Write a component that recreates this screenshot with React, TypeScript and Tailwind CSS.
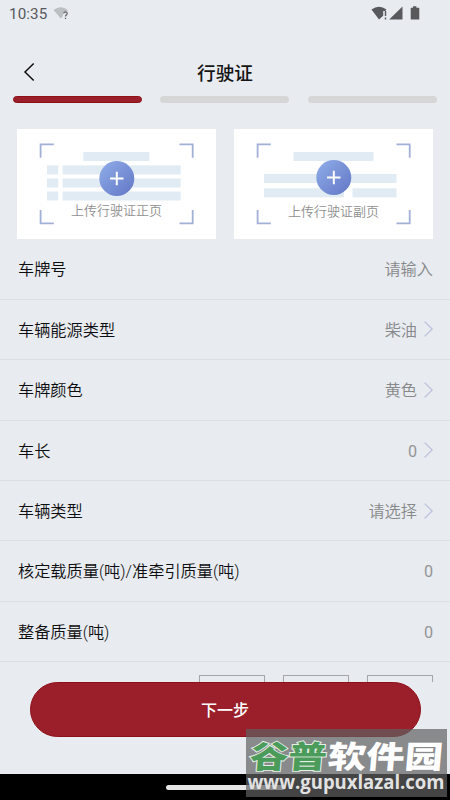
import React from "react";

type Row = { label: string; value: string; arrow?: boolean };

const rows: Row[] = [
  { label: "车牌号", value: "请输入" },
  { label: "车辆能源类型", value: "柴油", arrow: true },
  { label: "车牌颜色", value: "黄色", arrow: true },
  { label: "车长", value: "0", arrow: true },
  { label: "车辆类型", value: "请选择", arrow: true },
  { label: "核定载质量(吨)/准牵引质量(吨)", value: "0" },
  { label: "整备质量(吨)", value: "0" },
];

function StatusBar() {
  return (
    <div className="flex h-7 shrink-0 items-center justify-between pr-[29px] pl-[9px] text-[#57595c]">
      <div className="flex items-center gap-[6px]">
        <span className="text-[15.2px] leading-7 tracking-[0.1px]">10:35</span>
        <svg width="18" height="16" viewBox="0 0 18 16">
          <path d="M0.5 4Q7.5-1.5 15 4L13.5 6Q9.5 5.5 10 10L7.8 12.5Z" fill="#bcbfc1" />
          <path d="M10.7 7.5Q10.8 5.8 12.6 5.8Q14.3 5.9 14.3 7.5Q14.2 8.4 13.2 9.1Q12.5 9.6 12.5 10.5M12.5 11.8v1.3" fill="none" stroke="#66686a" strokeWidth="1.3" />
        </svg>
      </div>
      <svg width="50" height="16" viewBox="0 0 50 16">
        <path d="M0.5 3.5Q8-1.8 15.5 3.5L14 5H12.2V9.8L8 13.4Z" fill="#57595c" />
        <path d="M14.5 4.8v5.2M14.5 11.4v2" stroke="#57595c" strokeWidth="1.4" />
        <path d="M18.2 13.4L31.5 0.5V13.4Z" fill="#57595c" />
        <path d="M42 0.3h3.4v1.5h2.2q.7 0 .7.7v10.4q0 .7-.7.7h-7.2q-.7 0-.7-.7V2.5q0-.7.7-.7h1.6Z" fill="#57595c" />
      </svg>
    </div>
  );
}

function UploadCard({ back = false }: { back?: boolean }) {
  const cy = back ? 48.1 : 49.1;
  const cx = 99.8;
  return (
    <div className="relative h-[110px] w-[199px] bg-white">
      <svg width="199" height="110" viewBox="0 0 199 110" className="block">
        <defs>
          <linearGradient id={back ? "blueBack" : "blueFront"} x1="0" y1="0" x2="1" y2="1">
            <stop offset="0" stopColor="#90aee8" />
            <stop offset="1" stopColor="#6276c6" />
          </linearGradient>
        </defs>
        <g fill="#e0ebf4">
          {back ? (
            <>
              <rect x="59.5" y="23" width="80" height="9" />
              <rect x="30" y="45" width="132.5" height="9" />
              <rect x="30" y="59.3" width="80" height="9" />
              <rect x="118.5" y="59.3" width="44" height="9" />
            </>
          ) : (
            <>
              <rect x="66.4" y="23" width="66" height="9" />
              {[36.4, 49.5, 62.5].map((y) => (
                <g key={y}>
                  <rect x="30" y={y} width="11.2" height="9" />
                  <rect x="45.6" y={y} width="118" height="9" />
                </g>
              ))}
            </>
          )}
        </g>
        <path
          d="M23.6 28.8V15.4H36.8M162.5 15.4H175.7V28.8M23.6 81V94.4H36.8M162.5 94.4H175.7V81"
          fill="none"
          stroke="#a2b0d7"
          strokeWidth="1.8"
        />
        <circle cx={cx} cy={cy + 0.4} r="17.5" fill={back ? "url(#blueBack)" : "url(#blueFront)"} />
        <path d={`M${cx - 6.7} ${cy + 0.4}h13.4M${cx} ${cy - 6.3}v13.4`} stroke="#fff" strokeWidth="2" />
      </svg>
      <span className={`absolute inset-x-0 text-center text-[13px] leading-[20px] font-[350] text-[#909090] ${back ? "top-[73px]" : "top-[72px]"}`}>
        {back ? "上传行驶证副页" : "上传行驶证正页"}
      </span>
    </div>
  );
}

function FormRow({ label, value, arrow }: Row) {
  return (
    <div className="flex h-[60.4px] shrink-0 items-center justify-between border-b border-[#dcdfe2] pt-[3px] pr-[17px] pl-[18px] text-[16.2px] font-[350]">
      <span className="text-[#0c0d0e]">{label}</span>
      <span className={`flex items-center gap-[7px] ${value === "0" ? "font-normal text-[#949697]" : "text-[#868889]"}`}>
        {value}
        {arrow && (
          <svg width="9" height="16" viewBox="0 0 9 16" className="-mt-[3px]" fill="none" stroke="#bac0dc" strokeWidth="1.2">
            <path d="M0.6 0.6L8.2 8L0.6 15.4" />
          </svg>
        )}
      </span>
    </div>
  );
}

function Watermark() {
  return (
    <div className="absolute top-[729px] left-[246px] h-[68px] w-[201px] bg-[#616161]/70">
      <svg width="201" height="68" viewBox="0 0 201 68" className="block">
        <g transform="translate(5 39) skewX(-5)" fontFamily="'Noto Sans CJK SC', sans-serif" fontWeight="900" fontSize="31">
          <text x="-2" y="0" textLength="77" lengthAdjust="spacingAndGlyphs" fill="#4b9b5b" stroke="#e5eee6" strokeWidth="1.8" paintOrder="stroke">谷普</text>
          <text x="76" y="0" textLength="115" lengthAdjust="spacingAndGlyphs" fill="#fff">软件园</text>
        </g>
        <text x="1.5" y="60" textLength="197" lengthAdjust="spacingAndGlyphs" fontFamily="'Open Sans', sans-serif" fontSize="19.5" fontWeight="700" fill="#e2e2e2">www.gupuxlazal.com</text>
      </svg>
    </div>
  );
}

export default function App() {
  return (
    <div className="relative flex h-[800px] w-[450px] flex-col overflow-hidden bg-[#e8ebf0] font-[Roboto,'Noto_Sans_CJK_SC',sans-serif]">
      <StatusBar />
      <header className="grid h-[68px] shrink-0 grid-cols-3 items-center pt-[22px]">
        <svg width="12" height="20" viewBox="0 0 12 20" className="ml-[23px] -mt-[2px]" fill="none" stroke="#111" strokeWidth="1.5">
          <path d="M10.7 1.5L2 10L10.7 18.5" />
        </svg>
        <h1 className="pt-px text-center text-[18.6px] leading-[28px] font-medium text-[#151515]">行驶证</h1>
      </header>
      <div className="flex shrink-0 justify-between pr-[13.5px] pl-[13px]">
        <div className="h-[7px] w-[129px] rounded-full border border-[#8d1019] bg-[#9a1f2a]" />
        <div className="h-[7px] w-[129px] rounded-full bg-[#d6d6d6]" />
        <div className="h-[7px] w-[129px] rounded-full bg-[#d6d6d6]" />
      </div>
      <main className="flex h-[579px] shrink-0 flex-col overflow-hidden pt-[26.4px]">
        <div className="flex shrink-0 justify-between px-[17px]">
          <UploadCard />
          <UploadCard back />
        </div>
        {rows.map((row) => (
          <FormRow key={row.label} {...row} />
        ))}
        <div className="flex shrink-0 justify-end gap-[18px] pt-[13px] pr-[17.5px]">
          <div className="h-9 w-[66px] border border-[#a3a5a7]" />
          <div className="h-9 w-[66px] border border-[#a3a5a7]" />
          <div className="h-9 w-[66px] border border-[#a3a5a7]" />
        </div>
      </main>
      <footer className="h-[92px] shrink-0 px-[29.5px]">
        <button className="h-[54.5px] w-full rounded-full border border-[#8d1019] bg-[#9a1f2a] pt-[3px] text-[16px] font-medium text-white">下一步</button>
      </footer>
      <div className="flex h-[26px] shrink-0 items-center justify-center bg-black">
        <div className="h-[5px] w-[119px] rounded-full bg-[#e6e6e6]" />
      </div>
      <Watermark />
    </div>
  );
}
